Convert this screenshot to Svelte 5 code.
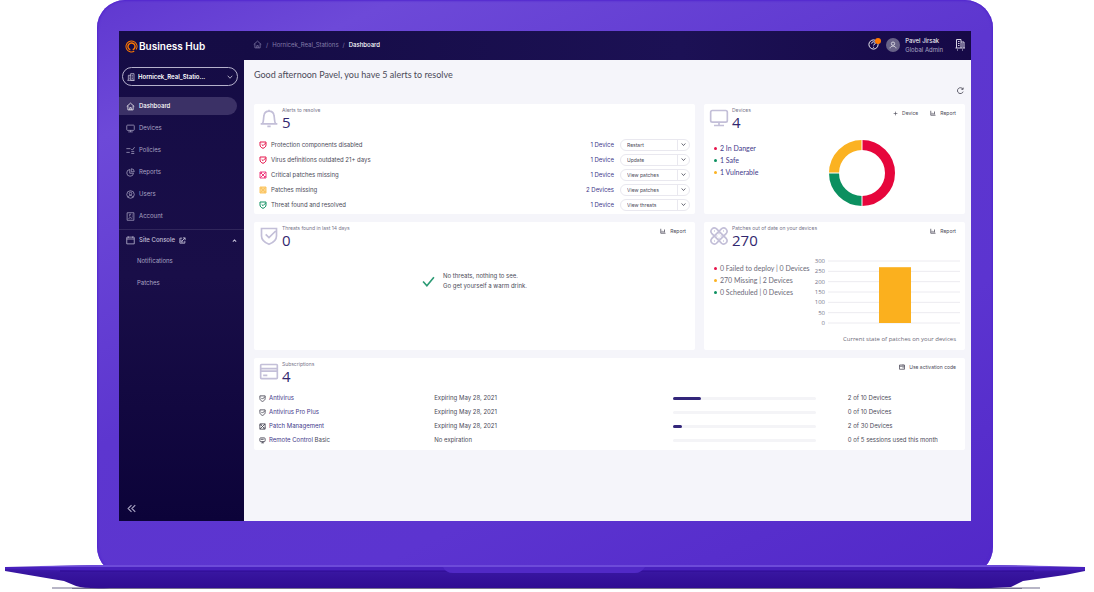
<script>
    const icons = {
        home: 'M2 12 12 3l10 9M5 10v11h14V10M10 21v-6h4v6',
        monitor: 'M4 3h16q2 0 2 2v10q0 2-2 2H4q-2 0-2-2V5q0-2 2-2zM12 17v4M6 21h12',
        policies: 'M1 7h11M1 17h9M14 8l3 3 6-8M14 15h8M14 20h8',
        reports: 'M10 4a9 9 0 1 0 10 10H10zM14 2v8h8a8 8 0 0 0-8-8z',
        users: 'M12 2a10 10 0 1 0 0 20 10 10 0 0 0 0-20zM12 6a3.500 3.500 0 1 0 0 7 3.500 3.500 0 0 0 0-7zM6 19c1-6 11-6 12 0',
        account: 'M3 2h18v20H3zM10 6v6M10 6h3M7 18c1-4 8-4 9 0M17 7v2M17 12v2',
        window: 'M3 3h18q1 0 1 1v17H2V4q0-1 1-1zM2 8h20M6 1v4M18 1v4',
        external: 'M11 4H3v17h17v-8M10 14 21 3M14 3h7v7M7 9v8h8',
        shield: 'M3 3h18v9c0 5-4 8-9 10-5-2-9-5-9-10zM8 10l4 4 8-8',
        patch: 'M3 3h18v18H3zM3 9l6-6M3 21 21 3M15 21l6-6M5 5l14 14',
        remote: 'M4 3h14q3 0 3 3v7q0 3-3 3H6q-3 0-3-3V4M9 20l6-4M9 20h8M6 8h10',
        bell: 'M2 19h20M4 19c2-3 1-6 2-10 1-7 11-7 12 0 1 4 0 7 2 10M10 22h4M12 4V2',
        card: 'M3 3h18q1 0 1 1v15q0 1-1 1H3q-1 0-1-1V4q0-1 1-1zM2 8h20M2 11h20M5 16h5',
        bandage: 'M8.8 3.200 20.800 15.200A4 4 0 0 1 15.200 20.800L3.200 8.800A4 4 0 0 1 8.800 3.200zM15.200 3.200 3.200 15.200A4 4 0 0 0 8.800 20.800L20.800 8.800A4 4 0 0 0 15.200 3.200zM12 9v1M12 14v1M9 12h1M14 12h1M6 6h1M17 6h1M6 18h1M17 18h1',
        chart: 'M3 3v18h19M8 18v-7M13 18v-5M18 18V6',
        code: 'M2 4h20v17H2zM2 9h20M14 15h5M16 2v4',
        building: 'M4 22V7h7M11 22V2h10v20zM1 22h22M7 12h2M7 17h2M14 7h4M14 12h4M14 17h4',
        sites: 'M5 18V1h9v17M14 6h6v12M3 18h19M8 5h3M8 9h3M8 13h3M16 10h2M16 14h2M7 21v2M17 21v2',
        refresh: 'M20 7a10 10 0 1 0 1 9M21 2v6h-6',
        chevron: 'M3 7l9 10 9-10',
        caret: 'M4 17l8-8 8 8',
        collapse: 'M12 3l-9 9 9 9M22 3l-9 9 9 9',
        check: 'M2 12l7 8L22 4',
        plus: 'M12 3v18M3 12h18',
        question: 'M12 2a10 10 0 1 0 0 20 10 10 0 0 0 0-20zM8 10c0-5 8-5 8-1 0 3-4 2-4 5M12 17v2',
        person: 'M12 3a5 5 0 1 0 0 10 5 5 0 0 0 0-10zM3 22c1-9 17-9 18 0'
    };

    const nav = [
        { icon: 'home', label: 'Dashboard' },
        { icon: 'monitor', label: 'Devices' },
        { icon: 'policies', label: 'Policies' },
        { icon: 'reports', label: 'Reports' },
        { icon: 'users', label: 'Users' },
        { icon: 'account', label: 'Account' }
    ];
    let active = $state('Dashboard');
    let consoleOpen = $state(true);

    const alerts = [
        { icon: 'shield', tone: 'red', text: 'Protection components disabled', count: '1 Device', action: 'Restart' },
        { icon: 'shield', tone: 'red', text: 'Virus definitions outdated 21+ days', count: '1 Device', action: 'Update' },
        { icon: 'patch', tone: 'pink', text: 'Critical patches missing', count: '1 Device', action: 'View patches' },
        { icon: 'patch', tone: 'yellow', text: 'Patches missing', count: '2 Devices', action: 'View patches' },
        { icon: 'shield', tone: 'green', text: 'Threat found and resolved', count: '1 Device', action: 'View threats' }
    ];

    const subscriptions = [
        { icon: 'shield', name: 'Antivirus', expires: 'Expiring May 28, 2021', used: 2, total: 10, usage: '2 of 10 Devices' },
        { icon: 'shield', name: 'Antivirus Pro Plus', expires: 'Expiring May 28, 2021', used: 0, total: 10, usage: '0 of 10 Devices' },
        { icon: 'patch', name: 'Patch Management', expires: 'Expiring May 28, 2021', used: 2, total: 30, usage: '2 of 30 Devices' },
        { icon: 'remote', name: 'Remote Control', extra: 'Basic', expires: 'No expiration', used: 0, total: 5, usage: '0 of 5 sessions used this month' }
    ];

    const ticks = [300, 250, 200, 150, 100, 50, 0];
    const tickY = (value) => 66 - (value / 300) * 62;
</script>

{#snippet icon(name, size = 8, width = 2)}
    <svg class="icon" width={size} height={size} viewBox="0 0 24 24" stroke-width={width} aria-hidden="true">
        <path d={icons[name]} />
    </svg>
{/snippet}

{#snippet cardTitle(name, title, value)}
    <div class="card-title">
        {@render icon(name, 20, 2)}
        <div>
            <h2>{title}</h2>
            <strong>{value}</strong>
        </div>
    </div>
{/snippet}

<div class="stage">
    <div class="lid">
        <div class="screen">
            <aside>
                <a class="brand" href="#home">
                    <svg width="13" height="13" viewBox="0 0 26 26" fill="none" stroke="#ff7800" aria-hidden="true">
                        <circle cx="13" cy="13" r="11" stroke-width="2" stroke-dasharray="62 7" transform="rotate(60 13 13)" />
                        <circle cx="13" cy="13" r="7" stroke-width="3" stroke-dasharray="38 6" transform="rotate(110 13 13)" />
                    </svg>
                    Business Hub
                </a>
                <div class="site">
                    {@render icon('building', 8)}
                    <select aria-label="Site">
                        <option>Hornicek_Real_Statio...</option>
                    </select>
                    {@render icon('chevron', 6, 3)}
                </div>
                <nav>
                    {#each nav as item}
                        <a href="#{item.label}" class:active={active === item.label} onclick={() => (active = item.label)}>
                            {@render icon(item.icon, 9)}
                            {item.label}
                        </a>
                    {/each}
                </nav>
                <div class="console">
                    <button class="console-toggle" onclick={() => (consoleOpen = !consoleOpen)}>
                        {@render icon('window', 9)}
                        <span>Site Console</span>
                        {@render icon('external', 7, 3)}
                        <span class="grow"></span>
                        {@render icon('caret', 5, 5)}
                    </button>
                    {#if consoleOpen}
                        <a href="#notifications">Notifications</a>
                        <a href="#patches">Patches</a>
                    {/if}
                </div>
                <button class="collapse" aria-label="Collapse menu">{@render icon('collapse', 9, 3)}</button>
            </aside>

            <div class="content">
                <header>
                    <div class="crumbs">
                        <a href="#home" aria-label="Home">{@render icon('home', 9)}</a>
                        <span>/</span>
                        <a href="#stations">Hornicek_Real_Stations</a>
                        <span>/</span>
                        <b>Dashboard</b>
                    </div>
                    <div class="account">
                        <button class="help" aria-label="Help">
                            {@render icon('question', 11)}
                            <i class="badge"></i>
                        </button>
                        <span class="avatar">{@render icon('person', 8)}</span>
                        <div class="who">
                            <span>Pavel Jirsak</span>
                            <small>Global Admin</small>
                        </div>
                        <button class="sites" aria-label="Switch company">{@render icon('sites', 12)}</button>
                    </div>
                </header>

                <main>
                    <h1>Good afternoon Pavel, you have 5 alerts to resolve</h1>
                    <div class="tools">
                        <button aria-label="Refresh">{@render icon('refresh', 7, 3)}</button>
                    </div>

                    <div class="cards">
                        <section>
                            <div class="card-head">{@render cardTitle('bell', 'Alerts to resolve', 5)}</div>
                            <ul class="alerts">
                                {#each alerts as alert}
                                    <li>
                                        <span class={alert.tone}>{@render icon(alert.icon, 8, 3)}</span>
                                        <span class="grow">{alert.text}</span>
                                        <a href="#devices">{alert.count}</a>
                                        <div class="action">
                                            <select aria-label={alert.text}>
                                                <option>{alert.action}</option>
                                            </select>
                                            <span>{@render icon('chevron', 5, 4)}</span>
                                        </div>
                                    </li>
                                {/each}
                            </ul>
                        </section>

                        <section>
                            <div class="card-head">
                                {@render cardTitle('monitor', 'Devices', 4)}
                                <button>{@render icon('plus', 5, 3)} Device</button>
                                <button>{@render icon('chart', 6, 3)} Report</button>
                            </div>
                            <div class="split">
                                <ul class="legend links">
                                    <li><i class="red"></i><a href="#danger">2 In Danger</a></li>
                                    <li><i class="green"></i><a href="#safe">1 Safe</a></li>
                                    <li><i class="yellow"></i><a href="#vulnerable">1 Vulnerable</a></li>
                                </ul>
                                <svg class="donut" width="66" height="66" viewBox="0 0 66 66" role="img" aria-label="Devices by state">
                                    <path d="M33 5a28 28 0 0 1 0 56" stroke="#e6063c" />
                                    <path d="M33 61A28 28 0 0 1 5 33" stroke="#0c9060" />
                                    <path d="M5 33A28 28 0 0 1 33 5" stroke="#fbb222" />
                                    <path class="gap" d="M33 0v66M0 33h12" />
                                </svg>
                            </div>
                        </section>

                        <section>
                            <div class="card-head">
                                {@render cardTitle('shield', 'Threats found in last 14 days', 0)}
                                <button>{@render icon('chart', 6, 3)} Report</button>
                            </div>
                            <div class="empty">
                                {@render icon('check', 13, 3)}
                                <p>No threats, nothing to see.<br />Go get yourself a warm drink.</p>
                            </div>
                        </section>

                        <section>
                            <div class="card-head">
                                {@render cardTitle('bandage', 'Patches out of date on your devices', 270)}
                                <button>{@render icon('chart', 6, 3)} Report</button>
                            </div>
                            <div class="split patches">
                                <ul class="legend">
                                    <li><i class="red"></i>0 Failed to deploy | 0 Devices</li>
                                    <li><i class="yellow"></i>270 Missing | 2 Devices</li>
                                    <li><i class="green"></i>0 Scheduled | 0 Devices</li>
                                </ul>
                                <svg class="bars" width="147" height="70" viewBox="0 0 147 70" role="img" aria-label="Current state of patches">
                                    {#each ticks as tick}
                                        <text x="12" y={tickY(tick) + 2}>{tick}</text>
                                        <line x1="15" x2="147" y1={tickY(tick)} y2={tickY(tick)} />
                                    {/each}
                                    <rect x="66" y={tickY(270)} width="32" height={66 - tickY(270)} />
                                </svg>
                            </div>
                            <p class="caption">Current state of patches on your devices</p>
                        </section>

                        <section class="wide">
                            <div class="card-head">
                                {@render cardTitle('card', 'Subscriptions', 4)}
                                <button>{@render icon('code', 6, 3)} Use activation code</button>
                            </div>
                            <table>
                                <tbody>
                                    {#each subscriptions as sub}
                                        <tr>
                                            <td class="name">
                                                <div>
                                                    {@render icon(sub.icon, 7, 3)}
                                                    <span><a href="#sub">{sub.name}</a> {sub.extra ?? ''}</span>
                                                </div>
                                            </td>
                                            <td class="expires">{sub.expires}</td>
                                            <td class="usage">
                                                <div class="track">
                                                    <div class="fill" style="width: {(sub.used / sub.total) * 100}%"></div>
                                                </div>
                                            </td>
                                            <td>{sub.usage}</td>
                                        </tr>
                                    {/each}
                                </tbody>
                            </table>
                        </section>
                    </div>
                </main>
            </div>
        </div>
    </div>

    <svg class="base" viewBox="0 0 1094 27" preserveAspectRatio="none" aria-hidden="true">
        <defs>
            <linearGradient id="deck" x2="0" y2="1">
                <stop offset="0" stop-color="#4620b8" />
                <stop offset="0.35" stop-color="#37159f" />
                <stop offset="1" stop-color="#300c92" />
            </linearGradient>
        </defs>
        <path d="M52 22h988v2H52z" fill="#b7b5c6" />
        <path d="M72 23h950v1H72z" fill="#77738f" />
        <path d="M5 2 100 0h890l95 2v4l-20 4-42 6-12 6q-30 2-60 1H110q-25 1-34-2l-12-5L5 6z" fill="url(#deck)" />
        <path d="M5 2h1080v3L1000 6H90L5 4z" fill="#4820bd" />
        <path d="M40 1 100 0h890l60 1v1H40z" fill="#6d4bd9" />
        <path d="M60 6h974" stroke="#2c0a90" />
        <path d="M443 2h202q-4 6-10 6H453q-7 0-10-6z" fill="#5129c6" />
    </svg>
</div>

<style>
    :global(body) {
        margin: 0;
        background: #fff;
    }

    .stage {
        font-family: Inter, "Liberation Sans", sans-serif;
        font-size: 6px;
        line-height: 8px;
        color: #4b4a58;
    }

    .lid {
        margin: 0 101px 0 97px;
        padding: 31px 22px 54px;
        border-radius: 28px;
        background: linear-gradient(155deg, #6038d0, #6d49d8 14%, #5d36cf 45%, #5c34d0 70%, #5228c8);
        box-shadow: inset 0 0 2px 1px #5226ce;
    }

    .screen {
        display: flex;
        background: #f5f5fa;
    }

    button, select {
        font: inherit;
        color: inherit;
        background: none;
        border: 0;
        margin: 0;
        padding: 0;
        appearance: none;
        cursor: pointer;
    }

    button {
        display: flex;
        align-items: center;
    }

    a {
        color: inherit;
        text-decoration: none;
    }

    ul {
        list-style: none;
        margin: 0;
        padding: 0;
    }

    h1, h2, p {
        margin: 0;
        font-weight: 400;
    }

    .icon {
        display: block;
        flex: none;
        fill: none;
        stroke: currentColor;
    }

    .grow {
        flex: 1;
    }

    /* sidebar */
    aside {
        flex: none;
        width: 125px;
        box-sizing: border-box;
        display: flex;
        flex-direction: column;
        padding-bottom: 8px;
        background: linear-gradient(#150c45, #190e48 50%, #0c0339);
        color: #a9a4c3;
    }

    .brand {
        display: flex;
        align-items: center;
        gap: 1px;
        padding: 8px 6px;
        font-size: 10px;
        font-weight: 600;
        line-height: 14px;
        color: #fff;
    }

    .site {
        display: flex;
        align-items: center;
        gap: 3px;
        margin: 6px 6px 11px 3px;
        padding: 0 4px;
        height: 17px;
        border: 1px solid #b5b1cc;
        border-radius: 10px;
        color: #dcd9ea;
    }

    .site select {
        flex: 1;
        min-width: 0;
        font-weight: 600;
        color: #fff;
    }

    nav {
        display: flex;
        flex-direction: column;
        gap: 4px;
        padding-bottom: 4px;
    }

    nav a {
        display: flex;
        align-items: center;
        gap: 4px;
        height: 18px;
        margin-right: 7px;
        padding-left: 7px;
        border-radius: 0 9px 9px 0;
    }

    nav a.active {
        background: #3b3166;
        color: #fff;
        font-weight: 500;
    }

    .console {
        display: flex;
        flex-direction: column;
        border-top: 1px solid #30265b;
    }

    .console a {
        padding-left: 18px;
        line-height: 22px;
    }

    .console-toggle {
        gap: 4px;
        height: 20px;
        padding: 0 7px;
        font-weight: 500;
        color: #c4c0d8;
    }

    .collapse {
        margin-top: auto;
        padding-left: 8px;
    }

    /* top bar */
    .content {
        flex: 1;
        min-width: 0;
    }

    header {
        display: flex;
        align-items: center;
        justify-content: space-between;
        box-sizing: border-box;
        height: 29px;
        padding: 0 5px 2px 9px;
        background: linear-gradient(90deg, #150c45, #1c1155 60%, #160947);
        color: #fff;
    }

    .crumbs {
        display: flex;
        align-items: center;
        gap: 4px;
        color: #837ca8;
    }

    .crumbs b {
        font-weight: 500;
        color: #fff;
    }

    .account {
        display: flex;
        align-items: center;
        gap: 5px;
    }

    .help {
        position: relative;
        margin-right: 2px;
    }

    .badge {
        position: absolute;
        top: -1px;
        right: -2px;
        width: 6px;
        height: 6px;
        border-radius: 50%;
        background: #ff7800;
    }

    .avatar {
        display: flex;
        align-items: center;
        justify-content: center;
        width: 14px;
        height: 14px;
        border-radius: 50%;
        background: #686287;
    }

    .who {
        display: flex;
        flex-direction: column;
        line-height: 9px;
    }

    .who small {
        font-size: 6px;
        color: #aaa5c4;
    }

    .sites {
        margin-left: 6px;
        color: #d5d2e4;
    }

    /* dashboard */
    main {
        padding: 9px 6px 71px 10px;
    }

    h1 {
        font-family: Lato, sans-serif;
        font-size: 9px;
        line-height: 12px;
    }

    .tools {
        display: flex;
        justify-content: flex-end;
        padding: 5px 1px 10px;
    }

    .tools button {
        height: 8px;
    }

    .cards {
        display: grid;
        grid-template-columns: 441fr 261fr;
        gap: 8px 9px;
    }

    section {
        min-width: 0;
        padding: 2px 5px;
        border-radius: 2px;
        background: #fff;
    }

    .wide {
        grid-column: 1 / -1;
        padding-bottom: 3px;
    }

    .card-head {
        display: flex;
        align-items: flex-start;
        gap: 12px;
        margin-bottom: 7px;
        padding-right: 4px;
    }

    .card-head button {
        gap: 4px;
        margin-top: 3px;
        font-size: 5px;
    }

    .card-title {
        flex: 1;
        display: flex;
        gap: 3px;
        color: #c3bfd8;
    }

    .card-title .icon {
        margin-top: 2px;
    }

    h2 {
        font-size: 5px;
        line-height: 8px;
        color: #77758a;
    }

    .card-title strong {
        display: block;
        font-family: "Open Sans", sans-serif;
        font-size: 15px;
        font-weight: 400;
        line-height: 16px;
        color: #32276f;
    }

    .alerts li {
        display: flex;
        align-items: center;
        gap: 4px;
        height: 15px;
    }

    .alerts a, .name a, .links a {
        color: #43398a;
    }

    .alerts a {
        padding-right: 2px;
    }

    .action {
        display: flex;
        box-sizing: border-box;
        width: 70px;
        height: 12px;
        border: 1px solid #e9e8ef;
        border-radius: 6px;
        font-size: 5px;
    }

    .action select {
        flex: 1;
        padding-left: 6px;
    }

    .action span {
        display: flex;
        align-items: center;
        padding: 0 3px;
        border-left: 1px solid #e9e8ef;
    }

    .red { color: #e6144b; }
    .pink { color: #ee3d80; }
    .yellow { color: #fbb222; }
    .green { color: #0c9060; }

    .alerts .yellow .icon {
        fill: #fbd48a;
        color: #fbc562;
    }

    .split {
        display: flex;
        justify-content: space-between;
    }

    .patches {
        padding-top: 2px;
    }

    .legend {
        padding: 5px 0 0 5px;
        font-family: Lato, sans-serif;
        font-size: 7px;
        line-height: 12px;
        color: #6c6a78;
        white-space: nowrap;
    }

    .legend li {
        display: flex;
        align-items: center;
        gap: 3px;
    }

    .legend i {
        width: 3px;
        height: 3px;
        border-radius: 50%;
        background: currentColor;
    }

    .donut {
        margin: 3px 65px 0 0;
        fill: none;
        stroke-width: 10;
    }

    .donut .gap {
        stroke: #fff;
        stroke-width: 1;
    }

    .empty {
        display: flex;
        align-items: center;
        justify-content: center;
        gap: 8px;
        padding-top: 16px;
        line-height: 10px;
    }

    .empty .icon {
        color: #2b9a74;
    }

    .bars {
        flex: none;
    }

    .bars text {
        font: 6px "Open Sans", sans-serif;
        text-anchor: end;
        fill: #77758a;
    }

    .bars line {
        stroke: #ecebf0;
    }

    .bars rect {
        fill: #fbb01e;
    }

    .caption {
        padding: 8px 4px 5px 0;
        font-family: "Open Sans", sans-serif;
        text-align: right;
        color: #6c6a78;
    }

    table {
        width: 100%;
        border-collapse: collapse;
        table-layout: fixed;
    }

    td {
        height: 14px;
        padding: 0;
    }

    .name { width: 25%; }
    .expires { width: 34%; }
    .usage { width: 25%; }

    .name div {
        display: flex;
        align-items: center;
        gap: 3px;
    }

    .track {
        width: 82%;
        height: 3px;
        border-radius: 2px;
        background: #f4f4f7;
    }

    .fill {
        height: 100%;
        border-radius: 2px;
        background: #33267a;
    }

    .base {
        display: block;
        position: relative;
        width: 100%;
        height: 27px;
        margin-top: -10px;
    }
</style>
